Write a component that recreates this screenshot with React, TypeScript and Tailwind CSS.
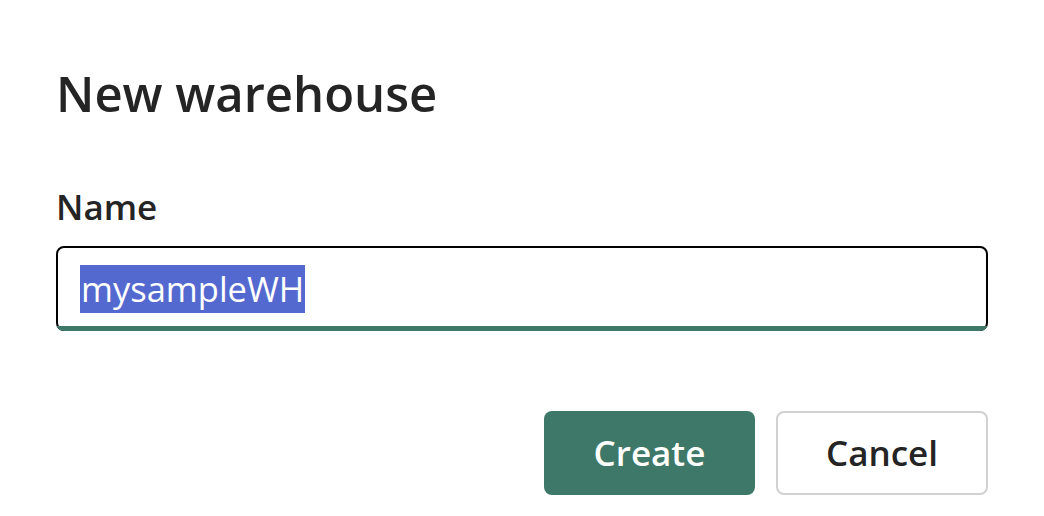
export default function App() {
  return (
    <div className="min-h-[516px] w-[1044px] bg-white px-[56px] text-[#242424] [font-family:'Open_Sans',sans-serif]">
      <h1 className="pt-[57px] text-[49px] font-semibold leading-[72px]">New warehouse</h1>

      <label className="mt-[53px] block text-[35px] font-semibold leading-[50px]">Name</label>

      <div className="relative mt-[14px] flex h-[85px] items-center rounded-[8px] border-2 border-black pl-[22px]">
        <span className="flex h-[48px] items-center bg-[#5469cf] px-[1px] text-[34.5px] leading-[48px] text-white">
          mysampleWH
        </span>
        <span className="absolute -bottom-[2px] -left-[2px] -right-[2px] h-[10px] rounded-b-[8px] border-b-[5px] border-[#3e7868] [clip-path:inset(calc(100%-5px)_0_0_0)]" />
      </div>

      <div className="mt-[80px] flex justify-end gap-[21px]">
        <button className="h-[84px] w-[211px] rounded-[8px] bg-[#3e7868] text-[35px] font-semibold text-white">
          Create
        </button>
        <button className="h-[84px] w-[212px] rounded-[8px] border-2 border-[#d1d1d1] bg-white text-[35px] font-semibold text-[#242424]">
          Cancel
        </button>
      </div>
    </div>
  );
}
